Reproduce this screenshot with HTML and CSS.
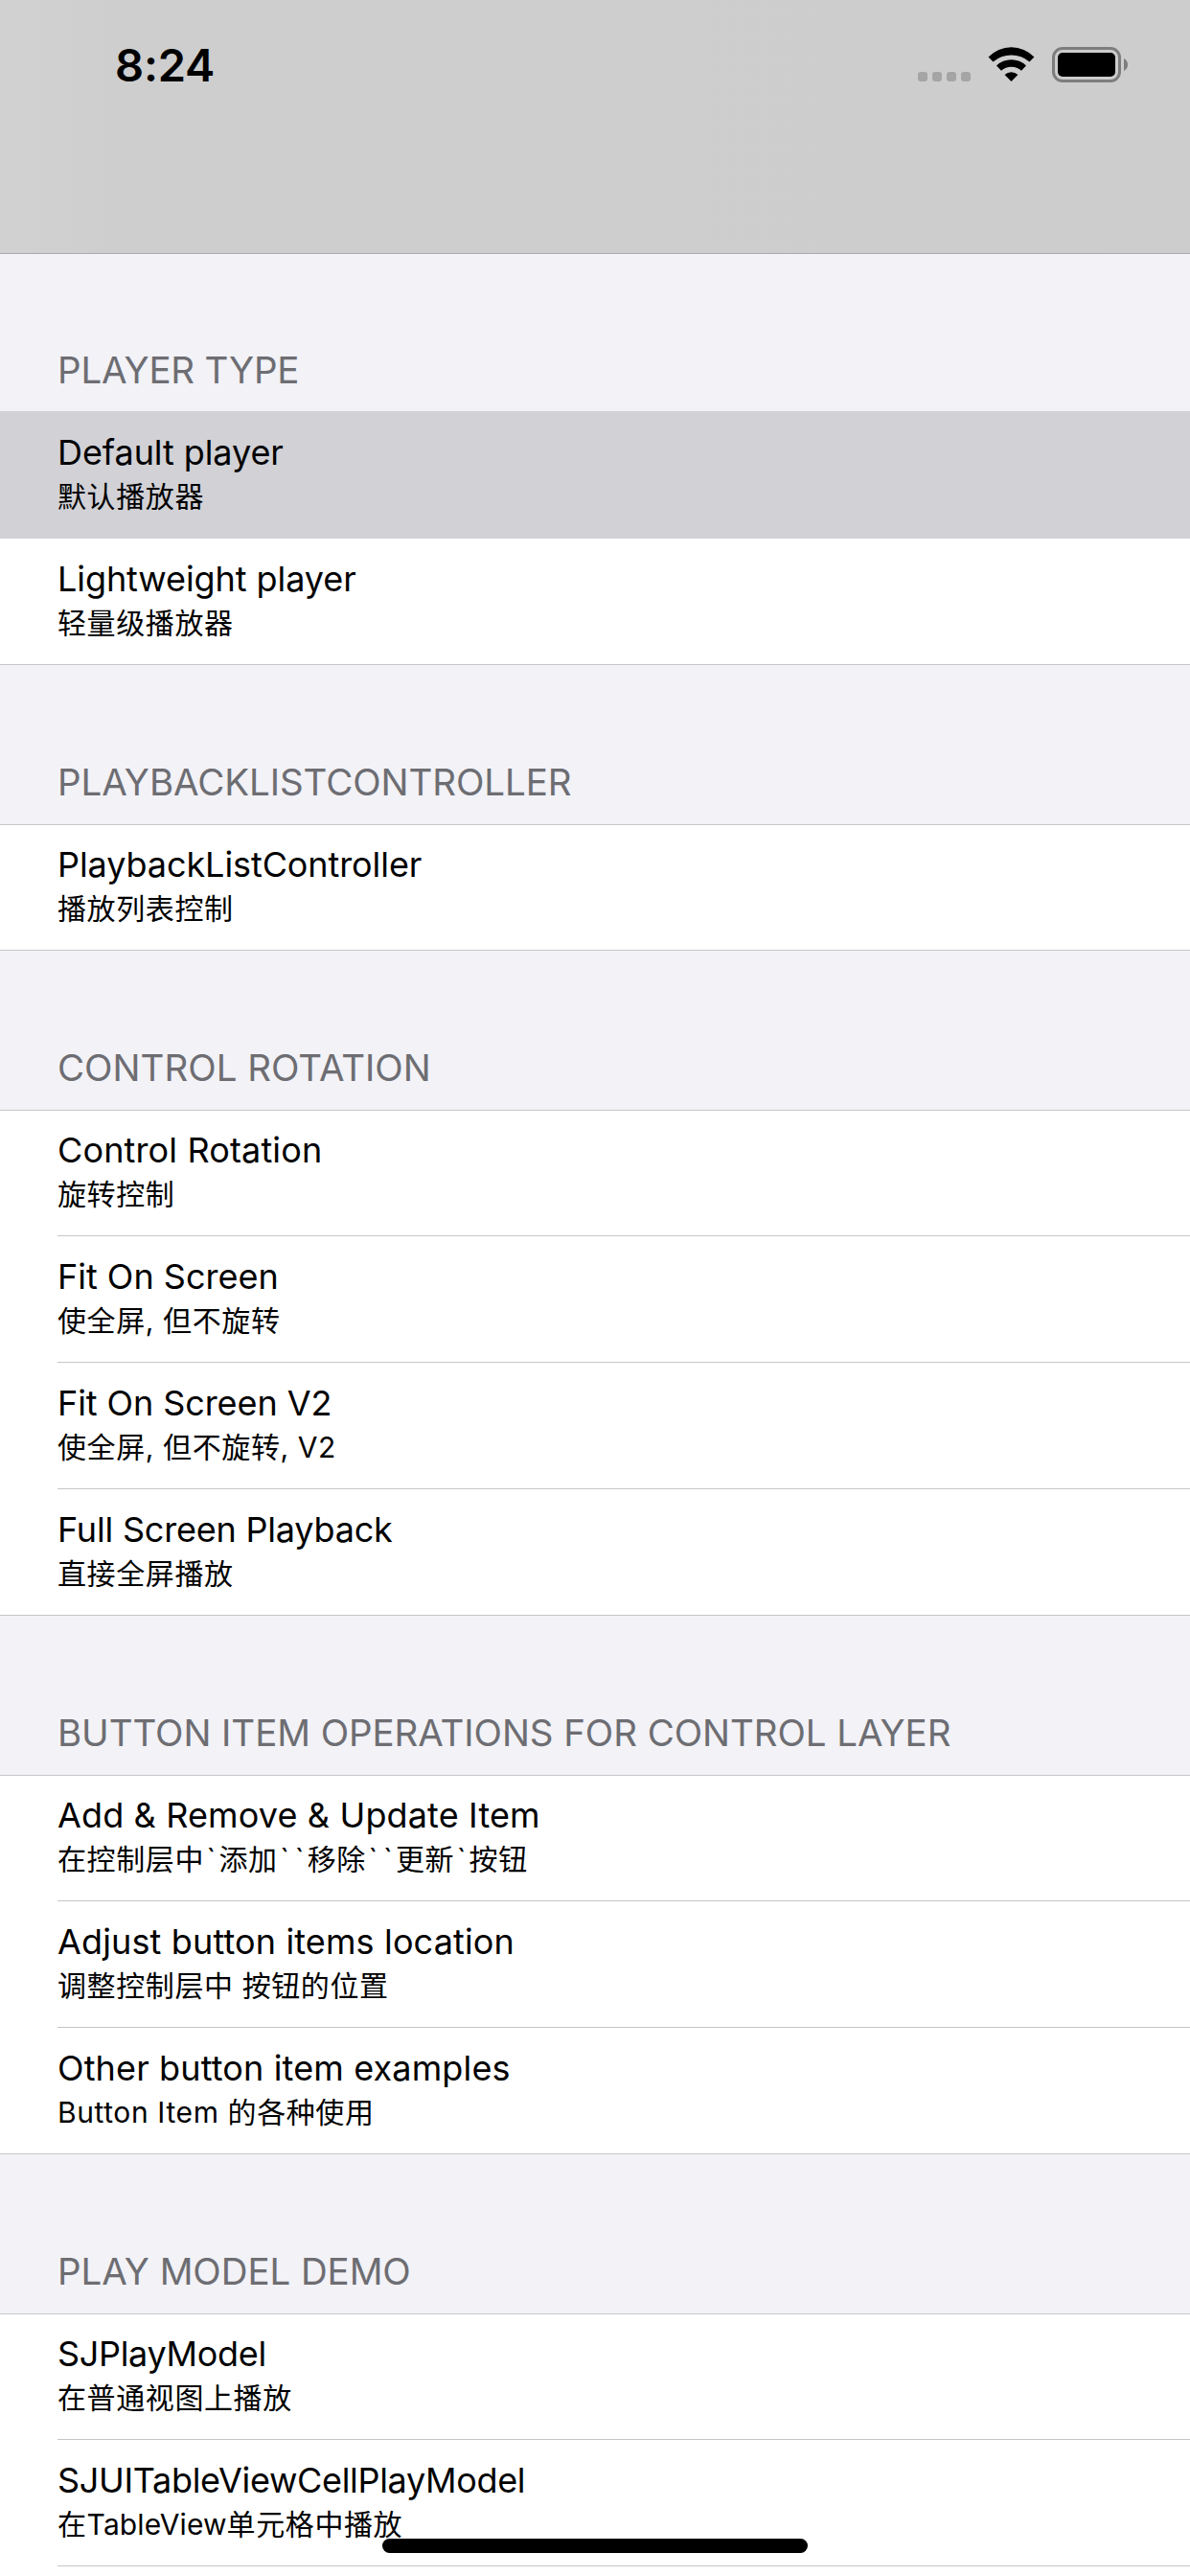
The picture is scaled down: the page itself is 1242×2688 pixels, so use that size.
FILE: index.html
```html
<!DOCTYPE html>
<html lang="zh-CN">
<head>
<meta charset="utf-8">
<title>Player Demo</title>
<link rel="stylesheet" href="styles.css">
</head>
<body>
<div class="screen">
  <header class="navbar">
    <div class="status">
      <span class="time">8:24</span>
      <svg class="indicators" width="220" height="40" viewBox="0 0 220 40">
        <g fill="#a5a5a5">
          <rect x="0" y="27" width="10" height="10" rx="3"/>
          <rect x="15" y="27" width="10" height="10" rx="3"/>
          <rect x="30" y="27" width="10" height="10" rx="3"/>
          <rect x="45" y="27" width="10" height="10" rx="3"/>
        </g>
        <path d="M73.6 11.5A33.2 33.2 0 0 1 121.4 11.5L116.5 16.5A29 29 0 0 0 78.5 16.5Z"/>
        <path d="M82 20.6A22 22 0 0 1 113 20.6L108 25.8A16 16 0 0 0 87 25.8Z"/>
        <path d="M90.6 29.9A10.3 10.3 0 0 1 104.4 29.9L97.5 37Z"/>
        <rect x="141.5" y="2.5" width="69" height="34" rx="9.5" fill="none" stroke="#7d7d7d" stroke-width="3"/>
        <rect x="146" y="7" width="60" height="25" rx="5"/>
        <path d="M215 13Q219 15.5 219 19.5T215 26Z" fill="#7d7d7d"/>
      </svg>
    </div>
  </header>
  <main class="table">
    <section class="group first">
      <h2 class="snug">PLAYER TYPE</h2>
      <ul>
        <li class="selected"><b class="tight">Default player</b><small>默认播放器</small></li>
        <li><b class="tight">Lightweight player</b><small>轻量级播放器</small></li>
      </ul>
    </section>
    <section class="group">
      <h2>PLAYBACKLISTCONTROLLER</h2>
      <ul>
        <li><b class="tight">PlaybackListController</b><small>播放列表控制</small></li>
      </ul>
    </section>
    <section class="group">
      <h2 class="normal">CONTROL ROTATION</h2>
      <ul>
        <li><b class="loose">Control Rotation</b><small>旋转控制</small></li>
        <li><b>Fit On Screen</b><small>使全屏, 但不旋转</small></li>
        <li><b class="tight">Fit On Screen V2</b><small>使全屏, 但不旋转, V2</small></li>
        <li><b class="snug">Full Screen Playback</b><small>直接全屏播放</small></li>
      </ul>
    </section>
    <section class="group">
      <h2>BUTTON ITEM OPERATIONS FOR CONTROL LAYER</h2>
      <ul>
        <li><b class="loose">Add &amp; Remove &amp; Update Item</b><small>在控制层中<i>`</i>添加<i>`</i><i>`</i>移除<i>`</i><i>`</i>更新<i>`</i>按钮</small></li>
        <li><b class="loose">Adjust button items location</b><small>调整控制层中 按钮的位置</small></li>
        <li><b class="loose">Other button item examples</b><small>Button Item 的各种使用</small></li>
      </ul>
    </section>
    <section class="group">
      <h2>PLAY MODEL DEMO</h2>
      <ul>
        <li><b class="tighter">SJPlayModel</b><small>在普通视图上播放</small></li>
        <li><b class="tighter">SJUITableViewCellPlayModel</b><small>在<span class="latin">TableView</span>单元格中播放</small></li>
        <li></li>
      </ul>
    </section>
  </main>
  <div class="home-indicator"></div>
</div>
</body>
</html>
```
FILE: styles.css
```css
* { box-sizing: border-box; }
body { margin: 0; background: #fff; }
.screen {
  position: relative;
  width: 1242px;
  height: 2688px;
  overflow: hidden;
  background: #f2f2f7;
  font-family: Inter, "Noto Sans CJK SC", sans-serif;
  color: #000;
}
.navbar {
  height: 265px;
  padding: 48px 64px 0 120px;
  border-bottom: 1px solid #a9a9ad;
  background: linear-gradient(90deg, #d1d1d1, #cecece 120px, #cdcdcd);
}
.status { display: flex; justify-content: space-between; height: 40px; }
.time { font-size: 47px; font-weight: 600; line-height: 40px; letter-spacing: -0.2px; }
.indicators { display: block; }
.group h2 {
  height: 166px;
  margin: 0;
  padding: 98px 0 0 60px;
  font-size: 38.5px;
  font-weight: 400;
  line-height: 48px;
  letter-spacing: -0.08px;
  color: #6d6d72;
  white-space: nowrap;
}
.group.first h2 { height: 165px; padding-top: 97px; }
.group ul {
  margin: 0;
  padding: 0;
  list-style: none;
  background: #fff;
  box-shadow: inset 0 1px #c6c6c8, inset 0 -1px #c6c6c8;
}
.group li {
  display: flex;
  flex-direction: column;
  height: 132px;
  padding-top: 19px;
  margin-left: 60px;
  white-space: nowrap;
}
.group li:not(:last-child) { border-bottom: 1px solid #c6c6c8; }
.group li.selected {
  height: 133px;
  margin: -1px 0 0;
  padding: 20px 0 0 60px;
  border-bottom-color: #d1d1d6;
  background: #d1d1d6;
}
.group b { font-size: 36px; font-weight: 400; line-height: 46px; }
.group small { font-size: 30px; line-height: 46px; letter-spacing: 0.6px; }
.group small i { display: inline-block; width: 15.5px; font-style: normal; text-align: center; }
.group .latin { letter-spacing: 0.1px; }
.group .normal { letter-spacing: 0; }
.group .loose { letter-spacing: 0.14px; }
.group .tight { letter-spacing: -0.08px; }
.group .snug { letter-spacing: -0.2px; }
.group .tighter { letter-spacing: -0.32px; }
.home-indicator {
  position: absolute;
  left: 399px;
  top: 2649px;
  width: 444px;
  height: 15px;
  border-radius: 7.5px;
  background: #000;
}
```
